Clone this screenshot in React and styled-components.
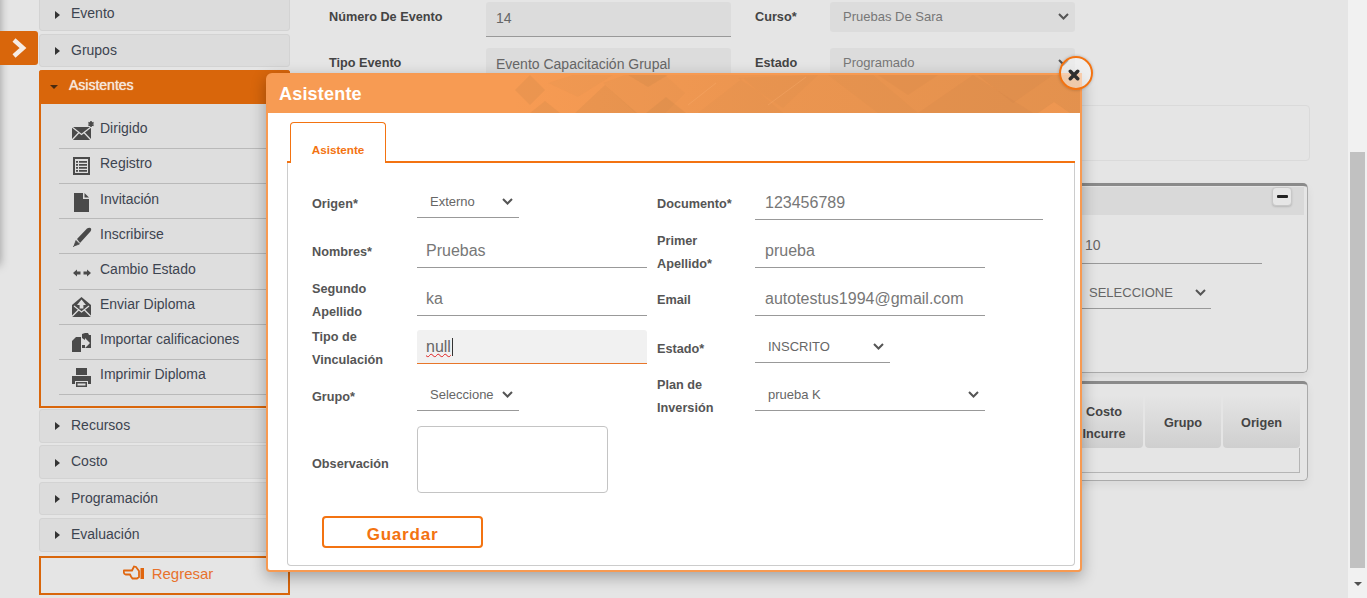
import React from "react";
import styled, { createGlobalStyle } from "styled-components";

const Global = createGlobalStyle`
  html, body { margin: 0; padding: 0; height: 598px; overflow: hidden; background: #e5e5e5; }
  body { font-family: "Liberation Sans", Arial, sans-serif; }
  * { box-sizing: border-box; }
`;

const Shell = styled.div`
  position: relative; height: 598px; overflow: hidden; display: flex; background: #e5e5e5;
`;
const Page = styled.div`
  flex: 1; min-width: 0; display: flex; gap: 20px; padding-left: 39px; align-items: flex-start;
`;
const Sidebar = styled.nav`
  width: 251px; flex: none; margin-top: -2.6px; display: flex; flex-direction: column; gap: 2.8px;
`;
const NavItem = styled.div`
  height: 33.6px; background: #dcdcdc; border: 1px solid #d3d3d3; border-radius: 3px;
  display: flex; align-items: center; padding: 0 0 2px 15px; gap: 11px;
  font-size: 14px; color: #3d4450;
`;
const CaretRight = styled.span`
  width: 0; height: 0; border-left: 5px solid #333; border-top: 4px solid transparent; border-bottom: 4px solid transparent; margin-top: 3px;
`;
const Group = styled.div`
  border: 2px solid #d9660b; border-top: 0; height: 337.500px; margin-bottom: -1.500px; background: #dedede; border-radius: 3px 3px 0 0; display: flex; flex-direction: column;
`;
const GroupHead = styled.div`
  height: 34px; flex: none; margin: 0 -2px; background: #d9660b; border-radius: 3px 3px 0 0; display: flex; align-items: center;
  padding: 0 0 4px 11px; gap: 11px; color: #f5e6da; font-size: 14px; text-shadow: 0 0 1px #fff;
`;
const CaretDown = styled.span`
  width: 0; height: 0; border-top: 4px solid #4a2a10; border-left: 4.5px solid transparent; border-right: 4.5px solid transparent; margin-top: 3px;
`;
const SubList = styled.div`
  padding: 9.400px 0 0 18px; display: flex; flex-direction: column;
`;
const SubItem = styled.div`
  height: 35.200px; flex: none; border-bottom: 1px solid #b9b9b9; display: flex; align-items: center; padding: 0 0 5px 13px; gap: 6px;
  font-size: 14px; color: #3d4450;
`;
const IconSlot = styled.svg`
  width: 22px; height: 20px; flex: none; margin-top: 6px; color: #4a4a4a;
`;
const BackButton = styled.div`
  margin-top: 1px; height: 39px; border: 2px solid #d9660b; display: flex; align-items: center; justify-content: center; gap: 7px;
  color: #e8722c; font-size: 15px; padding: 0 0 4px 7px;
`;
const BackIcon = styled.svg`
  width: 22px; height: 18px; margin-top: -3px; color: #e0660f;
`;
const Toggle = styled.div`
  position: absolute; left: 0; top: 31px; width: 38px; height: 34px; background: #d9660b; border-radius: 0 3px 3px 0;
  display: flex; align-items: center; justify-content: center;
`;
const DrawerEdge = styled.div`
  position: absolute; left: -10px; top: -10px; width: 10px; height: 275px; box-shadow: 0 0 10px rgba(0,0,0,.35);
`;

const Main = styled.main`
  width: 1000px; flex: none; padding-top: 2px; display: flex; flex-direction: column;
`;
const TopGrid = styled.div`
  display: grid; grid-template-columns: 157px 245px 24px 75px 245px; row-gap: 11px; padding-left: 19px; margin-bottom: 22px;
  & > div { height: 35px; }
`;
const TopLabel = styled.div`
  font-size: 12.7px; font-weight: bold; color: #444; padding-top: 8px; line-height: 14px;
`;
const Spacer = styled.div``;
const GreyInput = styled.div`
  background: #dcdcdc; border-bottom: 1px solid #999; border-radius: 3px 3px 0 0; font-size: 14px; color: #666; padding: 8px 10px 0;
  white-space: nowrap;
`;
const GreySelect = styled.div`
  && { height: 30px; }
  background: #dcdcdc; border-radius: 3px; font-size: 13px; color: #777; padding: 0 6px 2px 13px;
  display: flex; align-items: center; justify-content: space-between;
`;
const Box = styled.div`
  height: 56px; width: 1000px; border: 1px solid #dadada; border-radius: 4px; margin-bottom: 22px;
`;
const Panel = styled.section`
  width: 998px; border: 1px solid #aaa; border-top: 3px solid #8a8a8a; border-radius: 5px; box-shadow: 0 4px 8px rgba(0,0,0,.06);
`;
const TallPanel = styled(Panel)`
  height: 190px; margin-bottom: 8px; padding: 1px 3px 0 0;
`;
const PanelHead = styled.div`
  height: 28px; background: #d9d9d9; display: flex; justify-content: flex-end; padding-right: 12px;
`;
const MinusBtn = styled.div`
  width: 20px; height: 19px; background: #e6e6e6; border: 1px solid #c8c8c8; border-radius: 4px; box-shadow: 0 1px 2px rgba(0,0,0,.15);
  display: flex; align-items: center; justify-content: center;
`;
const MinusBar = styled.span`
  width: 11px; height: 3px; background: #222; border-radius: 1px;
`;
const PanelRow = styled.div`
  display: flex; justify-content: flex-end;
`;
const PanelInput = styled.div`
  width: 187px; height: 34px; margin: 15px 42px 0 0; padding: 7px 10px; border-bottom: 1px solid #999; font-size: 14px; color: #666;
`;
const PanelSelect = styled.div`
  width: 136px; height: 32px; margin: 13px 93px 0 0; padding: 0 5px 0 14px; border-bottom: 1px solid #999; font-size: 13px; color: #666;
  display: flex; align-items: center; justify-content: space-between;
`;
const TablePanel = styled(Panel)`
  height: 100px; padding: 11px 7px 0 0;
`;
const HeadRow = styled.div`
  display: flex; justify-content: flex-end; gap: 2px;
`;
const HeadCell = styled.div`
  width: ${p => p.$w}px; height: 53px; padding-top: 2px; background: linear-gradient(#e5e5e5, #cfcfcf); border-radius: 0 0 4px 4px;
  display: flex; align-items: center; justify-content: center; text-align: center;
  font-size: 12.7px; font-weight: bold; color: #444; line-height: 22px;
`;
const EmptyRow = styled.div`
  height: 25px; margin-left: 20px; border: 1px solid #b5b5b5; border-top: 0;
`;

const Scrollbar = styled.div`
  width: 19px; flex: none; background: #f1f1f1; padding: 152px 2px 0 2px; display: flex; flex-direction: column; align-items: flex-start; 
`;
const Thumb = styled.div`
  width: 15px; height: 416px; background: #c1c1c1;
`;
const ScrollArrow = styled.div`
  margin: 14px 0 0 4px; width: 0; height: 0; border-top: 4px solid #505050; border-left: 4px solid transparent; border-right: 4px solid transparent;
`;

const Modal = styled.div`
  position: absolute; left: 266px; top: 73px; width: 816px; height: 499px; background: #fff; border: 2px solid #f79a52; border-radius: 6px 0 4px 4px;
  box-shadow: 0 5px 15px rgba(0,0,0,.3); display: flex; flex-direction: column;
`;
const ModalHead = styled.header`
  position: relative; height: 38px; flex: none; background: #f79b53; overflow: hidden; display: flex; align-items: center; padding-left: 11px;
  color: #fff; font-size: 18px; font-weight: bold; letter-spacing: .2px;
`;
const HeadTitle = styled.span`
  position: relative;
`;
const Pattern = styled.svg`
  position: absolute; left: 0; top: 0; width: 812px; height: 38px;
`;
const Close = styled.div`
  position: absolute; left: 791px; top: -19px; width: 34px; height: 34px; border-radius: 50%; border: 2px solid #f37311;
  background: rgba(248,248,248,.55); box-shadow: 0 0 3px rgba(0,0,0,.25); display: flex; align-items: center; justify-content: center;
`;
const CloseGlyph = styled.svg`
  width: 12px; height: 12px; margin: 3px 5px 0 0;
`;
const ModalBody = styled.div`
  flex: 1; padding: 9px 5px 4px 19px; display: flex; flex-direction: column;
`;
const TabBar = styled.div`
  height: 41px; flex: none; border-bottom: 2px solid #f37311; padding-left: 3px;
`;
const Tab = styled.div`
  width: 96px; height: 41px; background: #fff; border: 1px solid #f37311; border-bottom: 0; border-radius: 4px 4px 0 0;
  display: flex; align-items: center; justify-content: center; padding-top: 12px;
  font-size: 11.7px; font-weight: bold; color: #f37311;
`;
const TabPanel = styled.div`
  flex: 1; border: 1px solid #ccc; border-top: 0; border-radius: 0 0 4px 4px; padding: 16px 0 0 24px;
`;
const Row = styled.div`
  display: grid; grid-template-columns: 105px 240px 98px 1fr; grid-template-rows: 48px; height: 48px; align-items: center;
`;
const Label = styled.div`
  font-size: 12.7px; font-weight: bold; color: #555; line-height: 23px;
  margin-top: ${p => p.$down ? 4 : 2}px;
`;
const Value = styled.div`
  width: ${p => p.$w}px; height: ${p => p.$focus ? 34 : 33}px; padding: 0 10px 0 ${p => p.$tight ? 9 : 10}px; display: flex; align-items: center;
  font-size: 16px; color: #777; white-space: nowrap;
  border-bottom: 1px solid ${p => p.$focus ? "#e8762a" : "#999"};
  background: ${p => p.$focus ? "#f1f1f1" : "transparent"};
  border-radius: ${p => p.$focus ? "3px 3px 0 0" : "0"};
`;
const Misspelled = styled.span`
  text-decoration: underline wavy #e02020 1.3px; text-underline-offset: 1px; border-right: 1px solid #333; padding-right: 1px; line-height: 18px; color: #666;
`;
const Select = styled.div`
  width: ${p => p.$w}px; height: 30px; margin-top: ${p => p.$down ? 2 : 0}px; padding: 0 6px 2px 13px; border-bottom: 1px solid #999; display: flex; align-items: center; justify-content: space-between;
  font-size: 13px; color: #666;
`;
const ObsRow = styled.div`
  display: grid; grid-template-columns: 105px 1fr; align-items: center; margin-top: 7px;
`;
const ObsLabel = styled(Label)`
  margin-top: 9px;
`;
const Obs = styled.textarea`
  width: 191px; height: 67px; border: 1px solid #c4c4c4; border-radius: 4px; background: #fff; resize: none; display: block;
`;
const Save = styled.button`
  display: block; width: 161px; height: 32px; margin: 23px 0 0 10px; background: #fff; border: 2px solid #f37311; border-radius: 4px;
  font-family: inherit; font-size: 17px; font-weight: bold; color: #f37311; letter-spacing: .8px; padding: 5px 0 0;
`;

const Chevron = ({ color = "#555" }) => (
  <svg width="11" height="7" viewBox="0 0 11 7" style={{ flex: "none" }}>
    <polyline points="1,1 5.5,5.5 10,1" fill="none" stroke={color} strokeWidth="2" />
  </svg>
);

const Icons = {
  dirigido: (
    <>
      <path d="M0 6h19v13H0z" fill="currentColor" />
      <path d="M0 6l9.500 7.500L19 6M0 19l7-7.500M19 19l-7-7.500" fill="none" stroke="#dedede" strokeWidth="1.3" />
      <path d="M19 0v6M16.400 1.500l5.200 3M21.600 1.500l-5.200 3" stroke="currentColor" strokeWidth="1.6" />
    </>
  ),
  registro: (
    <>
      <path fillRule="evenodd" d="M1 1h17v18H1zM3 3v14h13V3z" fill="currentColor" />
      <path d="M4 5h2v1.800H4zM7 5h8v1.800H7zM4 8h2v1.800H4zM7 8h8v1.800H7zM4 11h2v1.800H4zM7 11h8v1.800H7zM4 14h2v1.800H4zM7 14h8v1.800H7z" fill="currentColor" />
    </>
  ),
  invitacion: <path d="M2 1h9v6h6v13H2zM12.500 1l4.500 4.500h-4.500z" fill="currentColor" />,
  inscribirse: (
    <>
      <path d="M5 12L15 1.500c1.500-1 3.500-1 4 0s0 2.500-1 3.500L8 16z" fill="currentColor" />
      <path d="M4 13.500l3.500 3.500-5.500 2zM1 20l2-2" fill="currentColor" stroke="currentColor" strokeWidth=".8" />
    </>
  ),
  cambio: (
    <path d="M1 11l4-3.500v2h3.500v3H5v2zM19 11l-4-3.500v2h-3.500v3H15v2z" fill="currentColor" />
  ),
  enviar: (
    <>
      <path d="M0 8L9.500 0 19 8v12H0z" fill="currentColor" />
      <path d="M0 19.500l7-7M19 19.500l-7-7M2 9l7.500 6L17 9" fill="none" stroke="#dedede" strokeWidth="1.3" />
      <path d="M9.500 2.500L14 8h-2.600v3.500H7.600V8H5z" fill="#dedede" />
    </>
  ),
  importar: (
    <>
      <path d="M0 9l4-4h5v15H0z" fill="currentColor" />
      <path d="M10 6V2l3-1h3l1 2h2v13h-9v-3h3v3l5-5-5-5v2z" fill="currentColor" />
      <path d="M9 10h4V7.500l4 4-4 4V13H9z" fill="#dedede" />
    </>
  ),
  imprimir: (
    <>
      <path d="M4 1h11v7H4z" fill="currentColor" />
      <path d="M0 9h19v8h-3v-3H3v3H0z" fill="currentColor" />
      <path d="M4 15h11v5H4z" fill="currentColor" />
      <path d="M5.500 16.500h8v2h-8z" fill="#dedede" />
    </>
  ),
};

const subItems = [
  ["dirigido", "Dirigido"],
  ["registro", "Registro"],
  ["invitacion", "Invitación"],
  ["inscribirse", "Inscribirse"],
  ["cambio", "Cambio Estado"],
  ["enviar", "Enviar Diploma"],
  ["importar", "Importar calificaciones"],
  ["imprimir", "Imprimir Diploma"],
];

const HeaderPattern = () => (
  <Pattern viewBox="0 0 812 38">
    <defs>
      <linearGradient id="shade" x1="0" x2="1">
        <stop offset="0.3" stopColor="#b07840" stopOpacity="0" />
        <stop offset="0.6" stopColor="#b07840" stopOpacity=".16" />
        <stop offset="1" stopColor="#b07840" stopOpacity=".28" />
      </linearGradient>
    </defs>
    <rect width="812" height="38" fill="url(#shade)" />
    <g fill="#b87a42" fillOpacity=".17">
      <path d="M247 15l15-15 15 15-15 15z" />
      <path d="M262 38l15-12 15 12z" />
      <path d="M307 38l30-28 32 28z" />
      <path d="M378 38l20-16 20 16z" />
      <path d="M360 0h40l-20 12z" />
    </g>
    <g fill="#b87a42" fillOpacity=".07">
      <path d="M280 8l25-8h40l-35 22zM335 8l22-8 40 0 20 18-20 20h-30z" />
      <path d="M430 38l45-35 40 35zM470 3l45 30 35-33zM560 0l50 38h40l-45-38z" />
    </g>
    <g fill="#b87a42" fillOpacity=".1">
      <path d="M610 0l30 20 30-20zM650 38l55-38 60 38z" />
      <path d="M710 0l35 28 40-28z" />
    </g>
    <path d="M770 38l16-11 16 11z" fill="#f79b53" fillOpacity=".5" />
    <path d="M420 30l28-22M500 30l38-28" stroke="#f9b070" strokeOpacity=".35" fill="none" />
  </Pattern>
);

export default function App() {
  return (
    <Shell>
      <Global />
      <DrawerEdge />
      <Page>
        <Sidebar>
          <NavItem><CaretRight />Evento</NavItem>
          <NavItem><CaretRight />Grupos</NavItem>
          <Group>
            <GroupHead><CaretDown />Asistentes</GroupHead>
            <SubList>
              {subItems.map(([k, t]) => (
                <SubItem key={k}>
                  <IconSlot viewBox="0 0 22 20">{Icons[k]}</IconSlot>
                  {t}
                </SubItem>
              ))}
            </SubList>
          </Group>
          <NavItem><CaretRight />Recursos</NavItem>
          <NavItem><CaretRight />Costo</NavItem>
          <NavItem><CaretRight />Programación</NavItem>
          <NavItem><CaretRight />Evaluación</NavItem>
          <BackButton>
            <BackIcon viewBox="0 0 22 18">
              <path d="M1 7.500h8l2-4 2 .5 3 4v6l-2 1.500H9.500L8 13.500l-1-2H2.500C.5 11 .5 8 1 7.500z" fill="none" stroke="currentColor" strokeWidth="1.8" />
              <path d="M17.500 5h3.500v11h-3.500z" fill="currentColor" />
            </BackIcon>
            Regresar
          </BackButton>
        </Sidebar>
        <Main>
          <TopGrid>
            <TopLabel>Número De Evento</TopLabel>
            <GreyInput>14</GreyInput>
            <Spacer />
            <TopLabel>Curso*</TopLabel>
            <GreySelect>Pruebas De Sara<Chevron /></GreySelect>
            <TopLabel>Tipo Evento</TopLabel>
            <GreyInput>Evento Capacitación Grupal</GreyInput>
            <Spacer />
            <TopLabel>Estado</TopLabel>
            <GreySelect>Programado<Chevron /></GreySelect>
          </TopGrid>
          <Box />
          <TallPanel>
            <PanelHead><MinusBtn><MinusBar /></MinusBtn></PanelHead>
            <PanelRow><PanelInput>10</PanelInput></PanelRow>
            <PanelRow><PanelSelect>SELECCIONE<Chevron /></PanelSelect></PanelRow>
          </TallPanel>
          <TablePanel>
            <HeadRow>
              <HeadCell $w={78}>Costo<br />Incurre</HeadCell>
              <HeadCell $w={76}>Grupo</HeadCell>
              <HeadCell $w={77}>Origen</HeadCell>
            </HeadRow>
            <EmptyRow />
          </TablePanel>
        </Main>
      </Page>
      <Scrollbar>
        <Thumb />
        <ScrollArrow />
      </Scrollbar>

      <Toggle>
        <svg width="16" height="20" viewBox="0 0 16 20">
          <polyline points="3,2 12,10 3,18" fill="none" stroke="#f6ece4" strokeWidth="4.5" />
        </svg>
      </Toggle>

      <Modal>
        <ModalHead>
          <HeaderPattern />
          <HeadTitle>Asistente</HeadTitle>
        </ModalHead>
        <Close>
          <CloseGlyph viewBox="0 0 13 13">
            <path d="M2.500 2.500l8 8M10.500 2.500l-8 8" stroke="#2f2f2f" strokeWidth="3.8" strokeLinecap="round" />
          </CloseGlyph>
        </Close>
        <ModalBody>
          <TabBar><Tab>Asistente</Tab></TabBar>
          <TabPanel>
            <Row>
              <Label>Origen*</Label>
              <Select $w={102}>Externo<Chevron /></Select>
              <Label>Documento*</Label>
              <Value $w={288}>123456789</Value>
            </Row>
            <Row>
              <Label>Nombres*</Label>
              <Value $w={230} $tight>Pruebas</Value>
              <Label $down>Primer<br />Apellido*</Label>
              <Value $w={230}>prueba</Value>
            </Row>
            <Row>
              <Label $down>Segundo<br />Apellido</Label>
              <Value $w={230} $tight>ka</Value>
              <Label>Email</Label>
              <Value $w={230}>autotestus1994@gmail.com</Value>
            </Row>
            <Row>
              <Label $down>Tipo de<br />Vinculación</Label>
              <Value $w={230} $focus $tight><Misspelled>null</Misspelled></Value>
              <Label $down>Estado*</Label>
              <Select $w={135} $down>INSCRITO<Chevron /></Select>
            </Row>
            <Row>
              <Label $down>Grupo*</Label>
              <Select $w={102} $down>Seleccione<Chevron /></Select>
              <Label $down>Plan de<br />Inversión</Label>
              <Select $w={230} $down>prueba K<Chevron /></Select>
            </Row>
            <ObsRow>
              <ObsLabel>Observación</ObsLabel>
              <Obs />
            </ObsRow>
            <Save>Guardar</Save>
          </TabPanel>
        </ModalBody>
      </Modal>
    </Shell>
  );
}
